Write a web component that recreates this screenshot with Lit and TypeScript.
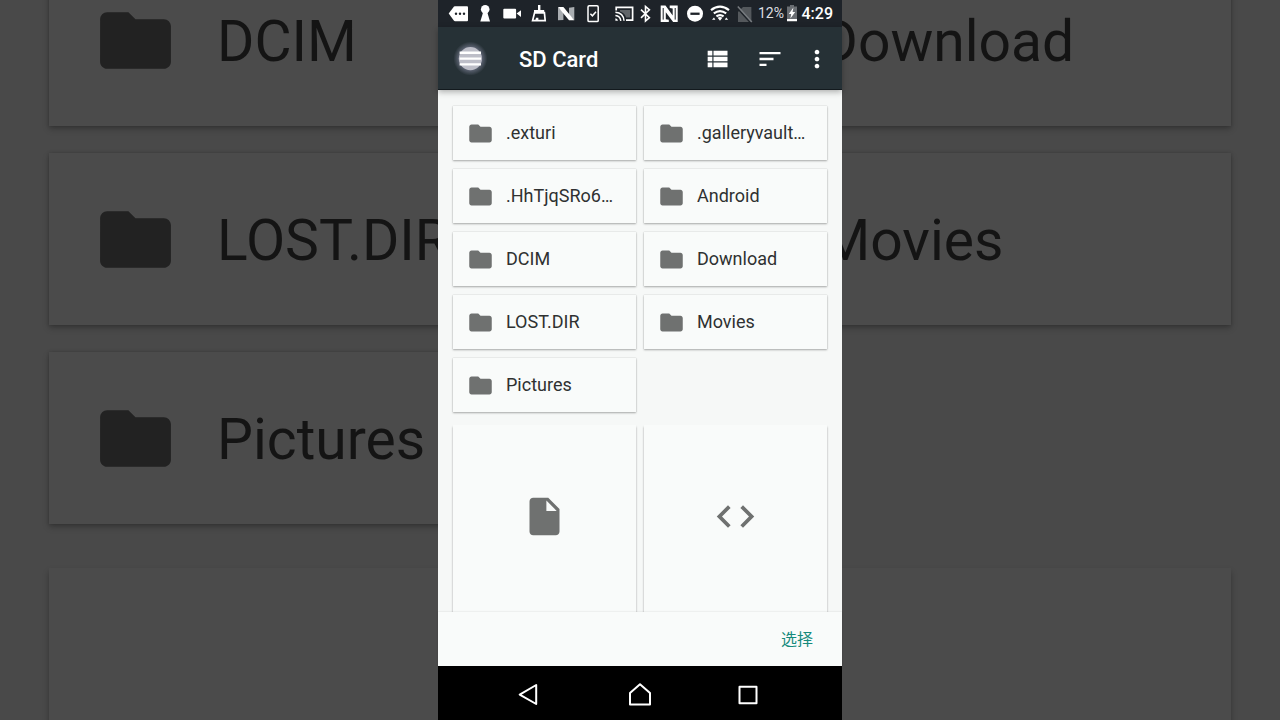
import { LitElement, html, css, svg } from "lit";
import { customElement, property } from "lit/decorators.js";

const FOLDER =
  "M10 4H4c-1.1 0-1.99.9-1.99 2L2 18c0 1.1.9 2 2 2h16c1.1 0 2-.9 2-2V8c0-1.1-.9-2-2-2h-8l-2-2z";
const FILE =
  "M6 2c-1.1 0-1.99.9-1.99 2L4 20c0 1.1.89 2 1.99 2H18c1.1 0 2-.9 2-2V8l-6-6H6zm7 7V3.5L18.5 9H13z";
const CODE =
  "M9.4 16.6 4.8 12l4.6-4.6L8 6l-6 6 6 6 1.4-1.4zm5.2 0 4.6-4.6-4.6-4.6L16 6l6 6-6 6-1.4-1.4z";
const VIEW_LIST =
  "M4 14h4v-4H4v4zm0 5h4v-4H4v4zM4 9h4V5H4v4zm5 5h12v-4H9v4zm0 5h12v-4H9v4zM9 5v4h12V5H9z";
const SORT = "M3 18h6v-2H3v2zM3 6v2h18V6H3zm0 7h12v-2H3v2z";
const MORE =
  "M12 8c1.1 0 2-.9 2-2s-.9-2-2-2-2 .9-2 2 .9 2 2 2zm0 2c-1.1 0-2 .9-2 2s.9 2 2 2 2-.9 2-2-.9-2-2-2zm0 6c-1.1 0-2 .9-2 2s.9 2 2 2 2-.9 2-2-.9-2-2-2z";

const glyph = (d: string) =>
  html`<svg class="glyph" viewBox="0 0 24 24" aria-hidden="true"><path d=${d}></path></svg>`;

const FOLDERS = [
  ".exturi",
  ".galleryvault…",
  ".HhTjqSRo6…",
  "Android",
  "DCIM",
  "Download",
  "LOST.DIR",
  "Movies",
  "Pictures",
];

/* Enlarged, dimmed copy of the list that fills the area behind the phone. */
@customElement("dim-backdrop")
class DimBackdrop extends LitElement {
  static styles = css`
    :host {
      display: block;
      overflow: hidden;
      background: #494949;
      font-family: Roboto, sans-serif;
    }
    .grid {
      display: grid;
      grid-template-columns: 1fr 1fr;
      gap: 27px 25px;
      padding: 0 49px;
      margin-top: -46px;
    }
    .card {
      display: flex;
      align-items: center;
      gap: 39px;
      height: 172px;
      box-sizing: border-box;
      padding-left: 44px;
      background: #4b4b4b;
      color: #141414;
      font-size: 57px;
      line-height: 68px;
      white-space: nowrap;
      box-shadow: 0 3px 6px rgba(0, 0, 0, 0.26), 0 0 3px rgba(0, 0, 0, 0.16);
    }
    .name {
      padding-top: 4px;
    }
    .glyph {
      width: 85px;
      height: 85px;
      flex: none;
      fill: #222;
    }
    .tile {
      grid-row: 4;
      margin-top: 17px;
      height: 580px;
      background: #4b4b4b;
      box-shadow: 0 4px 6px rgba(0, 0, 0, 0.3);
    }
  `;

  render() {
    return html`<div class="grid">
      ${FOLDERS.slice(4).map(
        (n) => html`<div class="card">${glyph(FOLDER)}<span class="name">${n}</span></div>`
      )}
      <div class="tile"></div>
      <div class="tile"></div>
    </div>`;
  }
}

@customElement("status-bar")
class StatusBar extends LitElement {
  static styles = css`
    :host {
      display: flex;
      align-items: center;
      height: 27px;
      padding: 0 9px 0 8px;
      background: #1e2329;
      color: #fff;
      font-family: Roboto, sans-serif;
    }
    svg {
      height: 27px;
      flex: none;
      overflow: visible;
      fill: #fff;
    }
    .wide {
      width: 27px;
    }
    .slim {
      width: 25px;
    }
    .level {
      font-size: 14px;
      line-height: 27px;
      color: #dcdee0;
    }
    .cell {
      width: 10px;
      margin: 0 auto 0 3px;
    }
    .time {
      font-size: 16px;
      line-height: 27px;
      font-weight: 500;
    }
  `;

  private wide = [
    svg`<path d="M2.7 13.6 8 6.6q.4-.4 1-.4h12q1 0 1 1v13q0 1-1 1H9q-.6 0-1-.4z"/><g fill="#1e2329"><circle cx="10" cy="13.7" r="1.2"/><circle cx="14" cy="13.7" r="1.2"/><circle cx="18" cy="13.7" r="1.2"/></g>`,
    svg`<circle cx="12.2" cy="9.2" r="4.3"/><path d="M10.2 12h4l2.8 9.6H7.3z"/>`,
    svg`<rect x="3.3" y="8.8" width="12.8" height="9.6" rx="1"/><path d="m16.6 13.6 4.4-3.4v6.9z"/>`,
    svg`<path d="M11 5h2.400v5h3.800v3.400H7V10h4z"/><path d="M7.600 12.600h9.800L18.200 20.600H5.600z" fill="none" stroke="#fff" stroke-width="1.700"/><path d="M8.400 20 9 17.800h2.400V20z"/>`,
    svg`<path d="M4 7.2 9.4 12v8L4 20.3zM15 7.8l5.3-.8v13.3L15 15z" fill="#a9adb1"/><path d="M4 7h5.4l10.9 13.3H15z"/>`,
    svg`<rect x="7" y="5.8" width="10.2" height="15.8" rx="1.2" fill="none" stroke="#fff" stroke-width="1.5"/><path d="m9.4 13.8 2 2 3.6-4" fill="none" stroke="#fff" stroke-width="1.5"/>`,
  ];

  private slim = [
    svg`<path d="M8.200 10.400V7.300h16.400v12.900H18" fill="none" stroke="#fff" stroke-width="1.700"/><path d="M12 10h10.200v7.600h-4.200q-1-4.600-6-6z" opacity=".3"/><path d="M7.400 12.200q8 .4 8.600 8.600M7.400 15.400q4.800.4 5.400 5.400" fill="none" stroke="#fff" stroke-width="1.500"/><path d="M7.400 18.200q2.200.2 2.600 2.600H7.400z"/>`,
    svg`<path d="m8 9.6 8.4 8-3.9 3.4V6.4l3.9 3.4-8.4 8" fill="none" stroke="#fff" stroke-width="1.6"/>`,
    svg`<path d="M2.700 5.600h4.800l7.200 9.800V8.600l-3-.6V5.600h8V22h-4.600L7.800 12.200v7l3 .6V22H2.700z"/><path d="M5.200 8v11.600M17.200 8v11.600" stroke="#1e2329" stroke-width="1"/>`,
    svg`<circle cx="12" cy="13.7" r="8"/><rect x="7.4" y="12.6" width="9.2" height="2.3" fill="#1e2329"/>`,
    svg`<g fill="none" stroke="#fff" stroke-width="2.200"><path d="M3 10.200q9-7 18 0"/><path d="M5.800 13.400q6.200-4.600 12.400 0"/><path d="M8.400 16.400q3.600-2.600 7.200 0"/></g><path d="m9.600 17.800 2.400 3 2.400-3q-2.400-1.400-4.800 0zM4 19.800l2-2.400 1.400 2.400zM16.800 19.800l1.400-2.400 2 2.400z"/>`,
    svg`<path d="M10 7h8.4v15H5V12z" fill="#54585c"/><path d="m4.600 8.400 13 14.200" stroke="#1e2329" stroke-width="1.600"/><path d="m4.800 6.600 14 15.400" stroke="#777b7f" stroke-width="1.500"/>`,
  ];

  render() {
    return html`
      ${this.wide.map((i) => html`<svg class="wide" viewBox="0 0 27 27" aria-hidden="true">${i}</svg>`)}
      ${this.slim.map((i) => html`<svg class="slim" viewBox="0 0 25 27" aria-hidden="true">${i}</svg>`)}
      <span class="level">12%</span>
      <svg class="cell" viewBox="0 0 10 27" aria-hidden="true">
        <path d="M3 5h4v1.600h3V21H0V6.600h3z" fill="#6a6e73"></path>
        <path d="M0 19h10v2.200H0zM6.400 7.400 1.800 14h2.400l-.8 4.400L8.200 12H5.600z"></path>
      </svg>
      <span class="time">4:29</span>
    `;
  }
}

@customElement("folder-card")
class FolderCard extends LitElement {
  @property() name = "";

  static styles = css`
    :host {
      display: block;
      min-width: 0;
    }
    .card {
      display: flex;
      align-items: center;
      gap: 12px;
      width: 100%;
      height: 54px;
      padding: 0 14px;
      border: 0;
      background: #f9fbfa;
      color: #2f3131;
      font: 18px/24px Roboto, sans-serif;
      text-align: left;
      box-shadow: 0 1px 2px rgba(0, 0, 0, 0.3), 0 0 1px rgba(0, 0, 0, 0.22);
    }
    .glyph {
      width: 27px;
      height: 27px;
      flex: none;
      fill: #6f7170;
    }
    .name {
      overflow: hidden;
      text-overflow: ellipsis;
      white-space: nowrap;
    }
  `;

  render() {
    return html`<button class="card">${glyph(FOLDER)}<span class="name">${this.name}</span></button>`;
  }
}

@customElement("app-root")
class AppRoot extends LitElement {
  static styles = css`
    :host {
      display: grid;
      grid-template: 100vh / 100%;
      overflow: hidden;
      font-family: Roboto, sans-serif;
    }
    .backdrop,
    .phone {
      grid-area: 1 / 1;
    }
    .phone {
      z-index: 1;
      justify-self: center;
      height: 100%;
      aspect-ratio: 101 / 180;
      display: flex;
      flex-direction: column;
      background: #f6f8f7;
    }
    button {
      border: 0;
      padding: 0;
      background: none;
      color: inherit;
      font: inherit;
    }
    svg {
      display: block;
    }
    .appbar {
      z-index: 1;
      display: flex;
      align-items: center;
      gap: 25px;
      height: 63px;
      flex: none;
      box-sizing: border-box;
      padding: 2px 17px 0 18px;
      background: #263136;
      border-bottom: 1px solid #131a1e;
      color: #fff;
      box-shadow: 0 2px 6px rgba(0, 0, 0, 0.3);
    }
    .menu {
      width: 28px;
      height: 28px;
    }
    .menu svg {
      width: 28px;
      height: 28px;
      overflow: visible;
    }
    .title {
      flex: 1;
      margin: 0;
      padding: 2px 0 0 10px;
      font-size: 22px;
      line-height: 28px;
      font-weight: 500;
    }
    .action {
      display: flex;
      justify-content: center;
      width: 28px;
    }
    .action .glyph {
      width: 28px;
      height: 28px;
      flex: none;
      fill: #fff;
    }
    .narrow {
      width: 16px;
    }
    .files {
      flex: 1;
      min-height: 0;
      overflow: hidden;
      padding: 16px 15px 0;
    }
    .folders,
    .documents {
      display: grid;
      grid-template-columns: 1fr 1fr;
      gap: 9px 8px;
    }
    .documents {
      margin-top: 13px;
    }
    .document {
      display: flex;
      flex-direction: column;
      background: #f9fbfa;
      box-shadow: 0 2px 2px rgba(0, 0, 0, 0.36);
    }
    .preview {
      display: grid;
      place-items: center;
      width: 100%;
      aspect-ratio: 1;
      padding-bottom: 54px;
    }
    .document .glyph {
      width: 45px;
      height: 45px;
      fill: #6f7170;
    }
    .footer {
      z-index: 1;
      display: flex;
      align-items: center;
      justify-content: flex-end;
      height: 54px;
      flex: none;
      box-sizing: border-box;
      padding: 2px 29px 0;
      background: #f9fbfa;
      box-shadow: 0 0 2px rgba(0, 0, 0, 0.14);
    }
    .select {
      color: #158a7c;
      font: 16px/24px Roboto, "Noto Sans CJK SC", sans-serif;
    }
    .nav {
      z-index: 1;
      display: flex;
      align-items: center;
      justify-content: center;
      gap: 81px;
      height: 54px;
      flex: none;
      background: #000;
    }
    .nav svg {
      width: 28px;
      height: 28px;
      fill: none;
      stroke: #fff;
      stroke-width: 2;
      stroke-linejoin: round;
    }
  `;

  render() {
    return html`
      <dim-backdrop class="backdrop" aria-hidden="true"></dim-backdrop>
      <main class="phone">
        <status-bar></status-bar>
        <header class="appbar">
          <button class="menu" aria-label="Menu">
            <svg viewBox="0 0 28 28" aria-hidden="true">
              <defs>
                <radialGradient id="halo">
                  <stop offset="0.62" stop-color="#8d90a8" stop-opacity="0.6"></stop>
                  <stop offset="1" stop-color="#8d90a8" stop-opacity="0"></stop>
                </radialGradient>
              </defs>
              <circle cx="14.400" cy="13.600" r="17" fill="url(#halo)"></circle>
              <circle cx="14.400" cy="13.600" r="11.600" fill="#bdbec8"></circle>
              <path d="M3.600 7.800h21.400M3.600 13.600h21.400M3.600 19.400h21.400" stroke="#fff" stroke-width="2.400"></path>
            </svg>
          </button>
          <h1 class="title">SD Card</h1>
          <button class="action" aria-label="List view">${glyph(VIEW_LIST)}</button>
          <button class="action" aria-label="Sort">${glyph(SORT)}</button>
          <button class="action narrow" aria-label="More options">${glyph(MORE)}</button>
        </header>
        <section class="files">
          <div class="folders">
            ${FOLDERS.map((n) => html`<folder-card .name=${n}></folder-card>`)}
          </div>
          <div class="documents">
            ${[FILE, CODE].map(
              (d) => html`<button class="document" aria-label="File">
                <span class="preview">${glyph(d)}</span>
              </button>`
            )}
          </div>
        </section>
        <footer class="footer"><button class="select">选择</button></footer>
        <nav class="nav">
          <button aria-label="Back">
            <svg viewBox="0 0 28 28"><path d="M19.200 6v19L2.700 15.600z"></path></svg>
          </button>
          <button aria-label="Home">
            <svg viewBox="0 0 28 28"><path d="M4 25.500V14L14 5.200 24 14v11.500z"></path></svg>
          </button>
          <button aria-label="Recent apps">
            <svg viewBox="0 0 28 28"><path d="M4.500 7.800h17v16.400h-17z"></path></svg>
          </button>
        </nav>
      </main>
    `;
  }
}
